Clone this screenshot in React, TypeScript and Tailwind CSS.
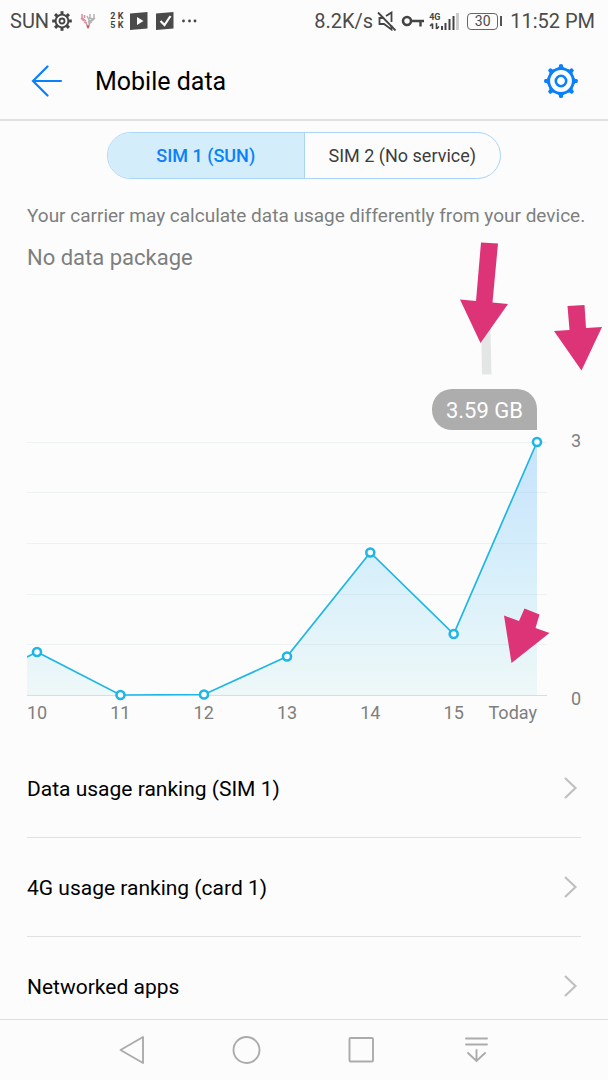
import { useState } from 'react';

const SIMS = ['SIM 1 (SUN)', 'SIM 2 (No service)'];

const LINKS = ['Data usage ranking (SIM 1)', '4G usage ranking (card 1)', 'Networked apps'];

// Plot coordinates: baseline at y=265, 3 GB at y=12
const POINTS = [
  { label: '10', x: 10, y: 222 },
  { label: '11', x: 93.5, y: 265 },
  { label: '12', x: 177, y: 264.5 },
  { label: '13', x: 260, y: 226.5 },
  { label: '14', x: 343.3, y: 122.5 },
  { label: '15', x: 426.7, y: 204 },
  { label: 'Today', x: 510, y: 12 },
];

const GRID = [12.5, 62.5, 113.5, 164.5, 214.5];

const LINE = `M0 227 L${POINTS.map((p) => `${p.x} ${p.y}`).join(' L')}`;

function SmallGear() {
  return (
    <svg viewBox="-10 -10 20 20" className="h-5 w-5" fill="none" stroke="#444" aria-hidden="true">
      <circle r="6.4" strokeWidth="1.9" />
      <circle r="2.5" strokeWidth="1.8" />
      {[0, 45, 90, 135, 180, 225, 270, 315].map((a) => (
        <path key={a} d="M0 -6.6V-9.8" strokeWidth="3" transform={`rotate(${a})`} />
      ))}
    </svg>
  );
}

function SettingsGear() {
  return (
    <svg viewBox="-18 -18 36 36" className="h-9 w-9" aria-hidden="true">
      <circle r="12.3" fill="none" stroke="#0a80fb" strokeWidth="2.8" />
      <circle r="5.2" fill="none" stroke="#0a80fb" strokeWidth="2.6" />
      {[0, 45, 90, 135, 180, 225, 270, 315].map((a) => (
        <path
          key={a}
          d="M-5 -12 L-2.1 -14.2 V-15.4 Q-2.1 -17 0 -17 Q2.1 -17 2.1 -15.4 V-14.2 L5 -12 Z"
          fill="#0a80fb"
          transform={`rotate(${a})`}
        />
      ))}
    </svg>
  );
}

function DeerIcon() {
  return (
    <svg viewBox="0 0 16 18" className="h-[18px] w-4" fill="none" strokeWidth="1.5" aria-hidden="true">
      <path d="M2 2v4l4 3M4.500 3v3M1 6l3 3M4 10l3 1" stroke="#dc8c9c" />
      <path d="M14 2v4l-4 3M10 2v4M15 6l-3 3M7 4l2 4v3l3-1M9 6l4 1M8 10l4-2" stroke="#b4b4b4" />
      <path d="M6 11l2 4 2-4" stroke="#b8a5a8" />
      <path d="M6.200 13.500h3.600L8 17z" fill="#e34862" />
    </svg>
  );
}

function StatusBar() {
  return (
    <div className="flex h-[42px] items-center justify-between pl-[10px] pr-[13px] text-[20px] leading-6 text-[#4b4b4b]">
      <div className="flex items-center">
        <span>SUN</span>
        <span className="ml-[3px]">
          <SmallGear />
        </span>
        <span className="ml-2">
          <DeerIcon />
        </span>
        <span className="ml-3.5 grid grid-cols-2 gap-x-0.5 text-[9px] leading-[9px] font-bold text-[#444]">
          <span>2</span>
          <span>K</span>
          <span>5</span>
          <span>K</span>
        </span>
        <svg viewBox="0 0 18 18" className="ml-1.5 h-[18px] w-[18px]" aria-hidden="true">
          <path d="M0 1.500 L17.500 0 V16.500 L0 18Z" fill="#4a4a4a" />
          <path d="M7 5v8l6.500-4z" fill="#fcfcfc" />
        </svg>
        <svg viewBox="0 0 18 18" className="ml-2 h-[18px] w-[18px]" aria-hidden="true">
          <path d="M0 1.500 L17.500 0 V16.500 L0 18Z" fill="#4a4a4a" />
          <path d="M4.500 9l4 4L14.500 4" fill="none" stroke="#fcfcfc" strokeWidth="2.200" />
        </svg>
        <svg viewBox="0 0 15 4" className="ml-2 h-1 w-[15px]" fill="#444" aria-hidden="true">
          <circle cx="1.500" cy="2" r="1.400" />
          <circle cx="7.500" cy="2" r="1.400" />
          <circle cx="13" cy="2" r="1.400" />
        </svg>
      </div>

      <div className="flex items-center">
        <span>8.2K/s</span>
        <svg viewBox="0 0 20 20" className="ml-1 h-5 w-5" fill="none" stroke="#444" strokeWidth="1.800" aria-hidden="true">
          <path d="M1 1.500 L18.500 19.500" />
          <path d="M7 7H2.500V13H7L14.500 18.500V14.500M9 5L14.500 1.500V11" />
        </svg>
        <svg viewBox="0 0 24 14" className="ml-1 h-3.5 w-6" fill="none" stroke="#444" aria-hidden="true">
          <circle cx="6" cy="7" r="4" strokeWidth="2.600" />
          <path d="M10 7H23M19.500 7V12.500" strokeWidth="2.400" />
        </svg>
        <span className="ml-1 flex items-end">
          <span className="flex flex-col text-[#444]">
            <span className="text-[9px] leading-[10px] font-bold">4G</span>
            <svg viewBox="0 0 12 8" className="h-2 w-3" fill="none" stroke="#444" strokeWidth="1.600" aria-hidden="true">
              <path d="M3.500 7V1.500M1 4L3.500 1.500M7.500 1V7M10 4.500L7.500 7" />
            </svg>
          </span>
          <svg viewBox="0 0 18 18" className="h-[18px] w-[18px]" fill="#444" aria-hidden="true">
            <path d="M0 14h2v4H0zM3.500 11h2v7h-2zM7.500 7h2v11h-2zM11.500 4h2v14h-2z" />
            <path d="M15 1h3v17h-3z" fill="#ccc" />
          </svg>
        </span>
        <span className="ml-2 flex items-center">
          <span className="flex h-[17px] w-[31px] items-center justify-center rounded-sm border border-[#666] text-[14px] leading-4">
            30
          </span>
          <span className="ml-0.5 h-2.5 w-0.5 bg-[#555]" />
        </span>
        <span className="ml-2">11:52 PM</span>
      </div>
    </div>
  );
}

function Header() {
  return (
    <header className="flex h-[79px] items-center border-b-2 border-[#dfe1e1] pl-[31px] pr-[29px]">
      <button type="button" aria-label="Back">
        <svg viewBox="0 0 32 32" className="h-8 w-8" fill="none" stroke="#0a80fb" strokeWidth="2.200" strokeLinecap="round" aria-hidden="true">
          <path d="M16.500 1.500 L2 16 L16.500 30.500M2 16H30" />
        </svg>
      </button>
      <h1 className="ml-8 flex-1 pt-0.5 text-[25px] leading-8 text-black">Mobile data</h1>
      <button type="button" aria-label="Settings">
        <SettingsGear />
      </button>
    </header>
  );
}

function UsageChart() {
  return (
    <div className="flex px-[27px] text-[18px] leading-[22px] text-[#7d7f7f]">
      <div className="flex-1">
        <svg viewBox="0 0 520 272" className="w-full" role="img" aria-label="Daily mobile data">
          <defs>
            <linearGradient id="usage" x1="0" y1="12" x2="0" y2="265" gradientUnits="userSpaceOnUse">
              <stop offset="0" stopColor="#c6e3fb" />
              <stop offset="0.5" stopColor="#d7effb" />
              <stop offset="1" stopColor="#eef8f8" />
            </linearGradient>
          </defs>
          <path d={`${LINE} V265 H0 Z`} fill="url(#usage)" />
          {GRID.map((y) => (
            <path key={y} d={`M0 ${y}H520`} stroke="#9bbcc4" strokeOpacity="0.15" />
          ))}
          <path d="M0 265.500H520" stroke="#d8dddd" />
          <path d={LINE} fill="none" stroke="#1fb6e6" strokeWidth="1.700" />
          {POINTS.map((p) => (
            <circle key={p.label} cx={p.x} cy={p.y} r="4" fill="#fff" stroke="#1fb6e6" strokeWidth="2.600" />
          ))}
        </svg>
        <div className="flex justify-between">
          {POINTS.map((p) => (
            <span
              key={p.label}
              className={p.label === 'Today' ? 'flex w-5 justify-end pr-[10px]' : 'flex w-5 justify-center'}
            >
              {p.label}
            </span>
          ))}
        </div>
      </div>
      <div className="flex w-[34px] flex-col items-end justify-between pb-3.5">
        <span>3</span>
        <span>0</span>
      </div>
    </div>
  );
}

function Arrows() {
  return (
    <svg viewBox="0 121 608 600" className="pointer-events-none absolute top-0 left-0 w-full" fill="#dd3377" aria-hidden="true">
      <path d="M481 320 L490 310 L491.500 374.500 H482Z" fill="#e4e5e5" />
      <path d="M481 242.500 L498 243.500 L492.500 302.500 L508 304 L480.500 343 L460 299.500 L476 301Z" />
      <path d="M567.500 306 L584.500 305 L586 328 L602 327 L581.500 370.500 L554 331 L569.500 330Z" />
      <path d="M524.500 608.500 L539.500 614.500 L535.500 628 L549.500 633 L511.500 663 L504 615.500 L519 621Z" />
    </svg>
  );
}

function NavBar() {
  return (
    <nav className="flex h-[61px] shrink-0 items-center justify-center gap-[83px] border-t border-[#dde0e0]">
      <button type="button" aria-label="Back">
        <svg viewBox="0 0 32 32" className="h-8 w-8" fill="none" stroke="#aaacac" strokeWidth="1.900" strokeLinejoin="round" aria-hidden="true">
          <path d="M27 3V29L4.500 16Z" />
        </svg>
      </button>
      <button type="button" aria-label="Home">
        <svg viewBox="0 0 32 32" className="h-8 w-8" fill="none" stroke="#aaacac" strokeWidth="1.900" aria-hidden="true">
          <circle cx="15.500" cy="16" r="13" />
        </svg>
      </button>
      <button type="button" aria-label="Recent apps">
        <svg viewBox="0 0 32 32" className="h-8 w-8" fill="none" stroke="#aaacac" strokeWidth="1.900" aria-hidden="true">
          <rect x="3.500" y="4" width="23.500" height="23.500" rx="1" />
        </svg>
      </button>
      <button type="button" aria-label="Notifications">
        <svg viewBox="0 0 32 32" className="h-8 w-8" fill="none" stroke="#aaacac" strokeWidth="1.900" strokeLinecap="round" aria-hidden="true">
          <path d="M5 4.500H26M5 10.500H26M15.500 16V27M7 19L15.500 27L24 19" />
        </svg>
      </button>
    </nav>
  );
}

export default function App() {
  const [sim, setSim] = useState(0);

  return (
    <div className="flex h-screen flex-col bg-[#fcfcfc] font-[Roboto,sans-serif]">
      <StatusBar />
      <Header />
      <main className="relative min-h-0 flex-1 overflow-y-auto pt-[11px] [scrollbar-width:none]">
        <div className="mx-[107px] flex h-[47px] overflow-hidden rounded-full border border-[#a9d5f6] text-[18px] leading-6">
          {SIMS.map((name, i) => (
            <button
              key={name}
              type="button"
              aria-pressed={sim === i}
              onClick={() => setSim(i)}
              className={`flex-1 first:border-r first:border-[#a9d5f6] ${
                sim === i ? 'bg-[#d3edfb] font-medium text-[#0a80fb]' : 'text-[#3c3c3c]'
              }`}
            >
              {name}
            </button>
          ))}
        </div>

        <p className="mt-[25px] px-[27px] text-[19px] leading-6 whitespace-nowrap text-[#7d7f7f]">
          Your carrier may calculate data usage differently from your device.
        </p>
        <p className="mt-4 px-[27px] text-[22px] leading-7 text-[#7d7f7f]">No data package</p>

        <div className="mt-[117px] flex justify-end pr-[71px]">
          <div className="rounded-[20px] rounded-br-none bg-[#adadad] px-[14px] pt-0.5 text-[22px] leading-[39px] text-white">
            3.59 GB
          </div>
        </div>
        <UsageChart />

        <ul className="mt-[15px] px-[27px]">
          {LINKS.map((name) => (
            <li key={name} className="border-b border-[#dfe1e1] last:border-b-0">
              <a href="#" className="flex h-[98px] items-center justify-between text-[21px] leading-7 text-black">
                <span className="pt-0.5">{name}</span>
                <svg viewBox="0 0 16 24" className="mr-[3px] h-6 w-4" fill="none" stroke="#bfc1c1" strokeWidth="2.200" aria-hidden="true">
                  <path d="M3 2L13.500 12L3 22" />
                </svg>
              </a>
            </li>
          ))}
        </ul>
        <Arrows />
      </main>
      <NavBar />
    </div>
  );
}
